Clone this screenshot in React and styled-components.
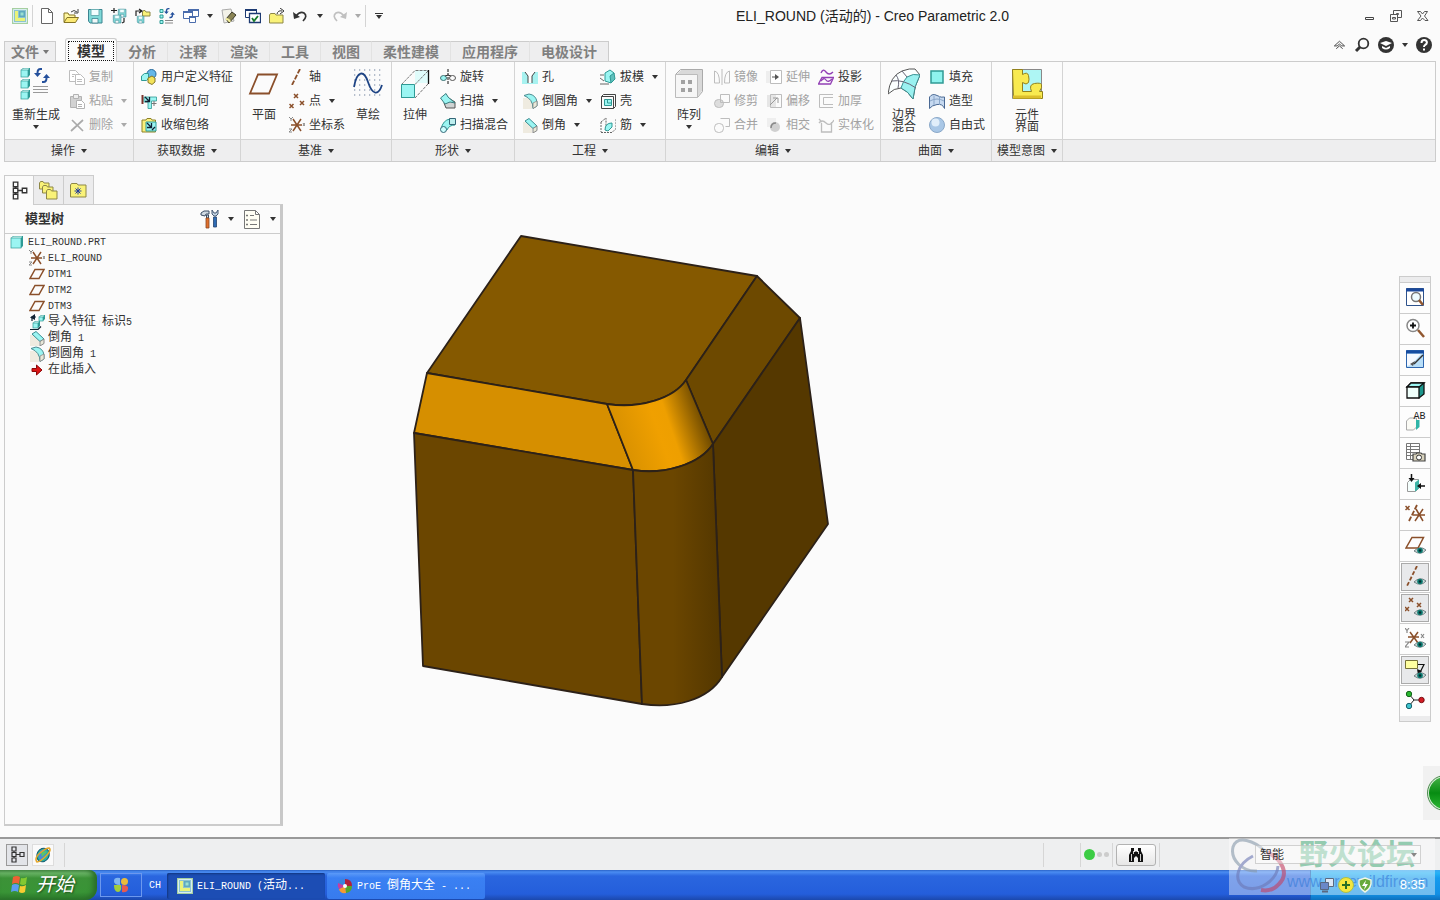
import React from "react";
import styled, { createGlobalStyle, css } from "styled-components";

const GlobalStyle = createGlobalStyle`
  *, *::before, *::after { box-sizing: border-box; }
  html, body { margin: 0; padding: 0; }
  body {
    background: #fbfbfb;
    color: #333;
    font: 12px/16px "Liberation Sans", "Noto Sans CJK SC", sans-serif;
  }
  button, select { font: inherit; color: inherit; }
  button { border: 0; padding: 0; background: none; white-space: nowrap; }
  ul { list-style: none; margin: 0; padding: 0; }
  svg { display: block; flex: none; }
`;

/* ---------- icons ---------- */

const C = "#9bf5f2";
const T = "#2f9a95";
const B = "#8a4f2a";
const N = "#1d3a72";
const G = "#bdbdbd";

const Eye = ({ x = 8, y = 10 }) => (
  <g transform={`translate(${x} ${y})`}>
    <path d="M0 5Q6-1 12 4Q7 10 0 5Z" fill="#c9d6d6" stroke="#5c6c70" strokeWidth=".8" />
    <circle cx="6" cy="4.500" r="2.800" fill="#0c7a70" />
    <circle cx="6" cy="4.500" r="1.200" fill="#052c30" />
  </g>
);
const Cross = ({ x, y, s = 2, c = B }) => (
  <path d={`M${x - s} ${y - s}l${2 * s} ${2 * s}M${x + s} ${y - s}l${-2 * s} ${2 * s}`} stroke={c} strokeWidth="1.5" fill="none" />
);
const Cube = ({ x, y, s = 7 }) => (
  <g transform={`translate(${x} ${y})`}>
    <path d={`M0 2L2 0H${s + 2}V${s}L${s} ${s + 2}H0Z`} fill={T} />
    <path d={`M.5 2L2.500 .5H${s + 1}L${s} 2Z`} fill="#e2fffd" />
    <rect y="2" width={s} height={s} fill={C} stroke={T} strokeWidth=".7" />
  </g>
);
const Cycle = ({ x, y }) => (
  <g transform={`translate(${x} ${y})`} fill="none" stroke="#24509c" strokeWidth="2">
    <path d="M8 1H6.500Q3.500 1 3.500 5V7M8 14h1.500Q12.500 14 12.500 10V8" />
    <path d="M0 5h7L3.500 9zM9 10h7L12.500 6z" fill="#24509c" stroke="none" />
  </g>
);
const Hierarchy = () => (
  <g fill="none" stroke="#333" strokeWidth="1.200">
    <path d="M3 1h4v4H3zM3 6.500h4v4H3zM3 12h4v4H3zM11 6.500h4v4h-4zM7 8.500h4M5 5v1.500M5 10.500v1.500" />
  </g>
);
const Folder = ({ x = 0, y = 0, w = 12, h = 9 }) => (
  <path transform={`translate(${x} ${y})`} d={`M.5 2V${h}H${w}V2H${w / 2}L${w / 2 - 1} .5H1.500Z`} fill="#f9f278" stroke="#8d8746" />
);
const CsysBody = () => (
  <g fill="none">
    <path d="M2 8H13M4 2l8 12M12 2l-8 12" stroke={B} strokeWidth="1.500" />
    <path d="M0 0l2 2 2-2M2 2v2M14 6l2 3M16 6l-2 3M0 12h3l-3 3h3" stroke="#888" />
  </g>
);
const Disk = ({ x = 0, y = 0, s = 14 }) => (
  <g transform={`translate(${x} ${y}) scale(${s / 14})`}>
    <path d="M.5 .5H14V14H2L.5 12Z" fill="#7fd9d8" stroke="#3b8490" />
    <path d="M3 .5h8v6H3z" fill="#f2fefe" stroke="#6cb0b4" />
    <path d="M4 9.500h6V14H4z" fill="#f1f8f8" stroke="#3b8490" strokeWidth=".8" />
  </g>
);

const ICONS = {
  app: <g><rect width="16" height="16" fill="#a6cfa0" /><path d="M1.500 1.500h13v13h-13z" fill="#8cc4cf" stroke="#d8eef0" /><path d="M3 3h3v7h7v3H3z" fill="#e9f37a" /><path d="M7 3h6v6H7z" fill="#5fa9c0" /><path d="M8.500 4.500h3v3h-3z" fill="#9be0d0" /></g>,
  page: <path d="M2.500 .5h7l4 4v11h-11zM9.500 .5v4h4" fill="#fff" stroke="#666" />,
  open: <g><path d="M1 14V5h4l1 2h6v2" fill="#fff7a0" stroke="#857525" /><path d="M1 14.500l3-5h11.500l-3 5z" fill="#fbe873" stroke="#857525" /><path d="M8 4q3-3 6 0M15 1v4h-4" fill="none" stroke="#444" /></g>,
  save: <Disk x={1} y={1} />,
  saveCopy: <g><Disk x={7} y={1} s={8} /><Disk x={2} y={7} s={8} /><path d="M0 2.500h6M3 0v5M13 10v4l-2 1" stroke="#222" strokeWidth="1.200" fill="none" /></g>,
  saveTo: <g><Folder x={7} y={2} w={8} h={6} /><Disk x={2} y={8} s={7} /><path d="M1 8V3h5M4 1l3 2-3 2" fill="none" stroke="#222" strokeWidth="1.200" /></g>,
  regenSmall: <g><path d="M1 1.500h3v3H1zM1 7h3v3H1zM1 12.500h3v3H1z" fill={C} stroke={T} /><path d="M6 15h8M6 12.500h8" stroke="#888" /><g transform="translate(5 0) scale(.68)"><Cycle x={0} y={0} /></g></g>,
  windows: <g fill="#fff" stroke="#4a6cac"><path d="M5.500 1.500h10v7h-10z" /><path d="M5 2h11" strokeWidth="2" /><path d="M.5 3.500h9v7h-9z" /><path d="M0 4h10" strokeWidth="2" /><path d="M6.500 8.500h6v6h-6z" /><path d="M6 9h7" strokeWidth="2" /></g>,
  brush: <g><path d="M1 2l9-1 3 12-10 2z" fill="#f3f2e8" stroke="#aaa" /><path d="M5 11L11 4l4 3-7 8z" fill="#8a8455" stroke="#3b3a28" /><path d="M5 11q3 0 4 3" stroke="#f3ee9b" strokeWidth="2" fill="none" /></g>,
  check: <g fill="#fff" stroke={N}><path d="M.5 1.500h11v8H.5z" /><path d="M0 2h12" strokeWidth="2" /><path d="M4.500 5.500h11v9h-11z" strokeWidth="1.300" /><path d="M7 10l2 3 4-5" stroke="#167a2a" strokeWidth="1.800" fill="none" /></g>,
  closeFolder: <g><Folder x={0} y={5} w={14} h={10} /><path d="M8 6q1-4 5-3M11 0l4 3-4 3" fill="none" stroke="#333" /></g>,
  undo: <g><path d="M3 8Q7 3 11 5Q15 8 10 13" fill="none" stroke="#333" strokeWidth="1.700" /><path d="M0 4l1 7 6-2z" fill="#333" /></g>,
  redo: <g><path d="M13 8Q9 3 5 5Q1 8 6 13" fill="none" stroke="#c0c0c0" strokeWidth="1.700" /><path d="M16 4l-1 7-6-2z" fill="#c0c0c0" /></g>,

  regen: <g><Cube x={1} y={0} s={7} /><Cube x={1} y={11} s={7} /><Cube x={1} y={22} s={7} /><Cycle x={14} y={0} /><path d="M13 18.500h15M13 21.500h15M13 24.500h15" stroke="#999" /></g>,
  plane: <path d="M10 6.500H29L21 25.500H2Z" fill="none" stroke={B} strokeWidth="1.800" />,
  sketch: <g><path d="M2 2h28M2 7h28M2 12h28M2 17h28M2 22h28M2 27h28" stroke="#9eaabd" strokeWidth="1.300" strokeDasharray="1.300 3.700" /><path d="M2 19C5 2 12 2 16 14S26 29 30 17" fill="none" stroke="#1d4384" strokeWidth="1.800" /></g>,
  extrude: <g><path d="M16 2h14v13H16z" fill="#e0fcfb" /><path d="M2.500 16.500L16 2.500H29.500M16 16.500L29 3M16 30L29 16M2.500 30V17" fill="none" stroke="#777" strokeDasharray="3 1" /><path d="M29.500 2v14" stroke="#111" strokeWidth="1.300" /><path d="M2.500 16.500h13v13h-13z" fill={C} stroke={T} /></g>,
  pattern: <g><path d="M3 7L8 2h21v21l-5 6z" fill="#d9d9d9" /><path d="M2.500 6.500L7.500 1.500h22v22l-5 6" fill="none" stroke="#aaa" /><path d="M2.500 6.500h22v23h-22z" fill="#f6f6f6" stroke="#bbb" /><path d="M8 12h4v4H8zM15 12h4v4h-4zM8 20h4v4H8zM15 20h4v4h-4z" fill="#a2a2a2" /></g>,
  boundary: <g strokeLinejoin="round"><path d="M0 26Q2 8 14 3Q22 0 27 1L32 7Q26 18 25 31Q20 23 13 20Q6 20 0 26Z" fill="#fbffff" stroke="#555" /><path d="M19 9Q25 5 32 7Q26 18 25 31Q20 23 13 20Q15 13 19 9Z" fill="#9af1f0" stroke="#3b9193" /><path d="M14 3L19 9M4 13Q15 11 28 20M8 7Q12 12 10 20" fill="none" stroke="#667" /></g>,
  uiParts: <g><path d="M1.500 1.500h29v29h-29z" fill="#aef6f4" stroke="#888" /><path d="M1.500 1.500h10v5q5-3 6 1t0 7q-2 3-6 0v9h9q-3-7 3-8t7 1q1 3-2 7h3v7h-29z" fill="#f8ea50" stroke="#92811c" /><path d="M2 29h28" stroke="#dcbf2c" strokeWidth="3" /></g>,

  copy: <g fill="#fff" stroke={G}><path d="M.5 1.500h6l3 3v8h-9z" /><path d="M6.500 5.500h5l4 4v6h-9zM8 10.500h5M8 12.500h5M3 5.500h3M3 7.500h2" /></g>,
  paste: <g stroke="#b2b2b2"><path d="M1.500 3.500h11v11h-11z" fill="#d2d2d2" /><path d="M4.500 1.500h5v4h-5z" fill="#eee" /><path d="M7.500 7.500h5l3 3v5h-8zM9 11.500h4M9 13.500h4" fill="#fff" /></g>,
  del: <path d="M3 3l11 11M14 3L2 14" stroke="#aaa" strokeWidth="1.700" />,
  udf: <g><circle cx="10.500" cy="5" r="4.500" fill="#65b7e8" stroke="#24679b" /><path d="M.5 7l3-2.500h4v5l-2 2h-5z" fill={C} stroke={T} /><path d="M7 9l4-2 3 2v4l-3 2.500-4-2z" fill="#f3e35a" stroke="#85762a" /></g>,
  copyGeom: <g><path d="M3 4h12.500v4h-5v7.500H7V9H3z" fill={C} stroke={T} strokeWidth=".8" /><path d="M1.500 2v9" stroke="#7b352e" strokeWidth="2" /><path d="M4 4l4 4M8.500 4v4.500H4" stroke="#123" strokeWidth="1.300" fill="none" /><path d="M13 8v5M10.500 10.500h5" stroke="#777" fill="none" /></g>,
  shrink: <g><path d="M1 3h4l1-1.500h4L11 3h3.500v12H1z" fill="#faf07c" stroke="#8d8127" /><path d="M5 5h10v9H5z" fill={C} stroke={T} /><path d="M6 6l4 4M10.500 6v4.500H6M11 13l3-3" stroke="#123" strokeWidth="1.300" fill="none" /></g>,
  axis: <path d="M11 0L3 16" stroke={B} strokeWidth="1.800" strokeDasharray="5 1.500" />,
  points: <g><Cross x={7} y={3} /><Cross x={2.5} y={13} /><Cross x={13} y={10} /></g>,
  csys: <CsysBody />,
  revolve: <g fill="none"><ellipse cx="3.500" cy="9" rx="3" ry="2.500" stroke="#3f7072" fill={C} /><ellipse cx="12.500" cy="9" rx="3" ry="2.500" stroke="#555" /><path d="M8 0v16" stroke="#111" strokeDasharray="3 1" /><path d="M5 7q3-2 6 0" stroke="#333" /></g>,
  sweep: <g strokeLinejoin="round"><path d="M4 10L7 4l8 5v6H6z" fill="#cfd3d3" stroke="#555" /><path d="M.5 5L6 .5 8 4l7 6-5-1-5 2z" fill={C} stroke="#3b7c7e" /></g>,
  sweptBlend: <g><path d="M1 12Q3 3 10 2l5 6Q9 8 7 13z" fill={C} stroke={T} /><circle cx="3.500" cy="12.500" r="3" fill="#cff" stroke="#367" /><path d="M9.500 1.500h6v6h-6z" fill="#bdeeee" stroke="#367" /></g>,
  hole: <g><path d="M0 3h16v12H0z" fill="#a7f2f0" /><path d="M3 3h10l-3 4v7H6V7z" fill="#fff" /><path d="M3 3l3 4v7M13 3l-3 4v7" fill="none" stroke="#444" /></g>,
  round: <g><path d="M1 5h6l3 3v8H1z" fill="#efebe0" /><path d="M2 2.500L7 1Q14 2 15 9v4l-4 2.500Q11 6 2 2.500Z" fill={C} stroke="#4b8c91" /><path d="M11 10l4-2v5l-4 2.500z" fill="#e9e9d9" stroke="#888" strokeWidth=".8" /></g>,
  chamfer: <g><path d="M1 5h6l3 5v6H1z" fill="#efebe0" /><path d="M3 4l4-2.500 8 7.500-4 2.500z" fill={C} stroke="#3b8c91" /><path d="M11 11.500L15 9v4.500L11 16z" fill="#e9e9d9" stroke="#888" /></g>,
  draft: <g><path d="M5 4l5-3 4 3-3 10-6-2z" fill={C} stroke={T} /><path d="M11 14l4-4-1-6-4 3z" fill="#5fc0bc" stroke={T} /><path d="M0 6h4M0 9l4 3M0 15h9" stroke="#666" /></g>,
  shell: <g fill="none" stroke="#444"><path d="M1.500 3.500l2-2h12v12l-2 2h-12z" /><path d="M1.500 3.500h12v12" /><path d="M4.500 6.500h7v6h-7z" fill={C} stroke={T} /><path d="M7.500 6.500v3.500h4" stroke={T} /></g>,
  rib: <g><path d="M1 5l5-4v12M1 15.500h11l4-4V2M1 5v10" fill="none" stroke="#666" strokeDasharray="2 1" /><path d="M5 13Q5 6 12 6v4l-4 4z" fill={C} stroke={T} /></g>,
  mirror: <g fill="none" stroke={G}><path d="M.5 2q5 1 5 12h-5zM15.500 2q-5 1-5 12h5zM8 0v16" /></g>,
  trim: <g stroke={G}><rect x=".5" y="6.500" width="9" height="8" rx="4" fill="#ddd" /><path d="M6.500 1.500h9v8h-9z" fill="none" /></g>,
  merge: <g fill="none" stroke={G}><rect x=".5" y="6.500" width="9" height="9" rx="4" /><path d="M6.500 1.500h9v8h-4" /></g>,
  extend: <g stroke={G}><path d="M0 2h4v12H0z" fill="#eee" stroke="none" /><path d="M4.500 1.500h11v13h-11z" fill="#fff" /><path d="M6 8h6" stroke="#555" fill="none" /><path d="M9 5l4 3-4 3z" fill="#555" stroke="none" /></g>,
  offset: <g stroke={G}><path d="M1 2h9v12H1z" fill="#e6e6e6" stroke="none" /><path d="M4.500 1.500h11v13h-11z" fill="none" /><path d="M4 12l7-7M7 5h5v5" stroke="#999" fill="none" /></g>,
  intersect: <g><path d="M1 1h9v9H1z" fill="#efefef" /><circle cx="9" cy="10" r="5" fill="#d0d0d0" /><path d="M5 11q0-5 5-5" stroke="#888" fill="none" strokeWidth="1.500" /></g>,
  project: <g fill="none" stroke="#9340b5" strokeWidth="1.300"><path d="M3 4q2-5 5-1t7 0M4 8.500h11.500l-3 6.500H.5z" /><path d="M3 12q3-4 5-1t6-1" /></g>,
  thicken: <path d="M15 1.500H1.500v13H15M15 4.500H5.500v7H15" fill="none" stroke={G} />,
  solidify: <path d="M1 6q3-4 7 0t8-3M3.500 6v9h10V5M1 2l3 3" fill="none" stroke={G} strokeWidth="1.300" />,
  fill: <rect x="2" y="2" width="12" height="12" fill="#8ef3ee" stroke={T} strokeWidth="1.500" />,
  style: <g><path d="M.5 4q3-4 7.500-1.500T15.500 4v11.500q-2-5-7.500-4T.5 15.500z" fill="#c6d9f0" stroke="#496893" /><path d="M5 3v9M10.500 3v9M1 8q7-4 14 0" stroke="#8ba6c8" fill="none" /></g>,
  freestyle: <g><circle cx="8" cy="8" r="7.500" fill="#a9c7e6" stroke="#8aa8c8" /><circle cx="6.500" cy="5.500" r="4" fill="#eff8ff" opacity=".8" /></g>,

  tree: <Hierarchy />,
  folders: <g><Folder x={0} y={0} w={10} h={8} /><Folder x={3} y={4} w={11} h={8} /><Folder x={7} y={8} w={11} h={10} /></g>,
  favorites: <g><Folder x={0} y={1} w={16} h={14} /><path d="M8 5.500v7M4.500 9h7M5.500 6.500l5 5M10.500 6.500l-5 5" stroke="#233c9c" /></g>,
  tools: <g><path d="M1 4l3-2h5v3H6L5 7 1 6z" fill="#cfd9e2" stroke="#3a4c64" /><path d="M6.500 6h2v3h-2z" fill="#cfd9e2" stroke="#3a4c64" /><path d="M6 9h3v10H6z" fill="#e0702c" stroke="#8a4724" strokeWidth=".8" /><path d="M12 1v4l2 2h2l2-2V1l-2 3h-2z" fill="#c3d3e2" stroke="#465a75" /><path d="M13.500 8h3v10h-3z" fill="#2f6bb3" stroke="#24436f" strokeWidth=".8" /></g>,
  settings: <g fill="#fffef4" stroke="#777"><path d="M1.500 .5h11l4 4v14h-15zM12.500 .5v4h4" /><path d="M7 5.500h4M7 10h7M7 14.500h7" /><path d="M3.500 5h1v1h-1zM3.500 9.500h1v1h-1zM3.500 14h1v1h-1z" /></g>,
  part: <Cube x={2} y={2} s={10} />,
  plane16: <path d="M6 3.500H15L10 12.500H1Z" fill="none" stroke={B} strokeWidth="1.500" />,
  importF: <g><Cube x={10} y={1} s={4} /><Cube x={4} y={7} s={5} /><path d="M1 15.500h8l3-3M3 7V3h4" fill="none" stroke="#123" strokeWidth="1.200" /><path d="M6 0L1 3.500 6 6z" fill="#123" /></g>,
  insert: <path d="M3 6.500h4.500V3L13 8l-5.500 5V9.500H3z" fill="#dc1515" stroke="#8c0808" />,

  refit: <g><path d="M1.500 1.500h17v17h-17z" fill="#fff" stroke="#2d528c" /><path d="M1 3h18" stroke="#1b499b" strokeWidth="3" /><circle cx="11" cy="10" r="4.500" fill="#eefcff" stroke="#777" strokeWidth="1.500" /><path d="M14 13l4 5" stroke="#91572f" strokeWidth="2.500" /></g>,
  zoomIn: <g><circle cx="8" cy="7.500" r="6" fill="#fff" stroke="#888" strokeWidth="1.500" /><path d="M5 7.500h6M8 4.500v6" stroke="#111" strokeWidth="1.800" /><path d="M13 12l6 7" stroke="#91572f" strokeWidth="2.500" /></g>,
  repaint: <g><path d="M1.500 1.500h17v17h-17z" fill="#b8def8" stroke="#2d65ae" /><path d="M1 3h18" stroke="#164ca0" strokeWidth="3" /><path d="M2 5h14L6 16l-4 1z" fill="#f5f9ff" /><path d="M18 6L9 15" stroke="#333" strokeWidth="1.500" /><path d="M10 12l-5 3 3 2z" fill="#555" /></g>,
  shaded: <g stroke="#111" strokeWidth="1.300"><path d="M2 7l4-4h13v11l-5 4z" fill="#1c968c" /><path d="M6 3h13l-5 4H2z" fill={C} /><path d="M2 7h12v11H2z" fill="#effffb" /></g>,
  saved: <g><path d="M1.500 10l3-3h7v9l-3 3h-7z" fill="#fbfbf5" stroke="#aaa" /><path d="M11 9h3.500v7L11 19z" fill="#2fb5a6" /><text x="8.500" y="8" fontSize="10" fontFamily="Liberation Mono" fill="#222">AB</text></g>,
  viewMgr: <g><path d="M1.500 1.500h13v16h-13zM1 4.500h13M1 7.500h13M1 10.500h13M1 13.500h13M5.500 1v16" fill="#fff" stroke="#777" /><path d="M8 12h3l1-1h4l1 1h3v7H8z" fill="#d9d3bd" stroke="#444" strokeWidth="1.200" /><circle cx="14" cy="15.500" r="2.500" fill="#fff" stroke="#333" /></g>,
  clip: <g><path d="M2.500 9.500l3-3h8v9l-3 3h-8z" fill="#f5fffd" stroke="#999" /><path d="M10 9.500l4-3v9l-4 3z" fill="#3cb4a6" /><path d="M6.500 1v5M20 13h-5" fill="none" stroke="#111" strokeWidth="1.500" /><path d="M3.500 5h6l-3 4zM16 10v6l-4-3z" fill="#111" /></g>,
  datumAll: <g><Cross x={2.5} y={4} s={2} /><path d="M12 1L4 17" stroke={B} strokeWidth="1.800" strokeDasharray="5 1.500" /><path d="M8 11h12M11 5l7 12M18 5l-8 12" stroke={B} strokeWidth="1.500" /></g>,
  planeEye: <g><path d="M7 2.500H18.500L13 13H1Z" fill="none" stroke={B} strokeWidth="1.500" /><Eye x={9} y={11} /></g>,
  axisEye: <g><path d="M12 0L2 20" stroke={B} strokeWidth="1.800" strokeDasharray="4 2" /><Eye x={9} y={11} /></g>,
  pointEye: <g><Cross x={6} y={3} /><Cross x={2} y={12} /><Cross x={14} y={8} /><Eye x={9} y={11} /></g>,
  csysEye: <g><path d="M3 9h11M5 4l8 11M13 4L5 15" stroke={B} strokeWidth="1.500" /><path d="M0 0l2 2.500L4 0M2 2.500V5M0 14h4l-4 5h4M16 6l3 4M19 6l-3 4" stroke="#888" fill="none" strokeWidth="1.200" /><Eye x={9} y={12} /></g>,
  noteEye: <g><path d="M.5 1.500h12v8H.5z" fill="#ffffa0" stroke="#777238" /><path d="M13 5.500h6l-4 8" fill="none" stroke="#111" strokeWidth="1.200" /><path d="M12 10l1 6 4-4z" fill="#111" /><Eye x={9} y={12} /></g>,
  spin: <g><path d="M4 4l5 6h8M9 10l-5 6" stroke="#222" fill="none" /><circle cx="4" cy="4" r="2.700" fill="#29b72f" stroke="#14631a" /><circle cx="4" cy="16" r="2.700" fill="#40c4ce" stroke="#16616c" /><circle cx="16.500" cy="10" r="2.700" fill="#d41d25" stroke="#790c11" /></g>,

  min: <path d="M4.500 9.500h8v2h-8z" fill="none" stroke="#444" />,
  restore: <g fill="#fbfbfb" stroke="#555"><path d="M5.500 2.500h8v7h-8zM8.500 5.500h2v1h-2z" /><path d="M2.500 6.500h7v7h-7zM4.500 9.500h3v1.500h-3z" /></g>,
  close: <path d="M2.500 3.500h3l2 2.500 2-2.500h3L9.500 8l3.500 4.500h-3L7.500 10l-2 2.500h-3L6 8z" fill="none" stroke="#555" />,
  collapse: <path d="M2.500 8.500L8 3.500l5.500 5h-3L8 6.500l-2.500 2zM4.500 11.500L8 8.500l3.500 3" fill="none" stroke="#444" />,
  search: <g fill="none" stroke="#333"><circle cx="9.500" cy="6.500" r="4.800" strokeWidth="1.800" /><path d="M6 10l-4 4" strokeWidth="3" /></g>,
  learn: <g><circle cx="8" cy="8" r="8" fill="#333" /><path d="M2 6l6-2 6 2-6 3zM4 9v2q4 3 8 0V9L8 11z" fill="#fff" /></g>,
  help: <g><circle cx="8" cy="8" r="8" fill="#333" /><path d="M5.500 6q0-3 2.700-3t2.700 2.500Q10.900 7 9 8q-1 .6-1 2" fill="none" stroke="#fff" strokeWidth="2" /><path d="M7 11.500h2v2H7z" fill="#fff" /></g>,

  browser: <g><ellipse cx="8" cy="8" rx="6" ry="7" fill="#25b3a3" stroke="#145870" transform="rotate(30 8 8)" /><path d="M6 3q6-1 5 4l-5 6q-3-2-2-6z" fill="#4d86d8" /><path d="M6 6q3-3 6-1l-5 5z" fill="#59c766" /><path d="M2 15Q-1 11 5 6T14 1Q17 3 11 9T2 15z" fill="none" stroke="#e5a72b" strokeWidth="1.600" /></g>,
  binoc: <g fill="#111"><path d="M3 1h3v4h1l1-1 1 1h1V1h3v3l2 4v7h-5v-4l-2-2-2 2v4H1V8l2-4z" /><path d="M3.500 7v7M12.500 7v7M5.500 4v3M10.500 4v3" stroke="#fff" strokeWidth=".8" /></g>,
  winFlag: <g><path d="M3 2q4-2 7 0L9 9Q6 7 2 9z" fill="#ee6134" /><path d="M11 3q3 1 6-1l-1 7q-3 2-6 0z" fill="#83c931" /><path d="M2 10q3-2 7 0l-1 7q-3-2-7 0z" fill="#5b9df0" /><path d="M10 11q3 1 6-1l-1 7q-3 2-6 0z" fill="#f7cc32" /></g>,
  clover: <g><path d="M7 1Q1 0 1 4t6 4z" fill="#7fb5f0" /><circle cx="11.500" cy="4.500" r="3.500" fill="#eabc3b" /><path d="M1 8h7q1 7-3 7t-4-7z" fill="#a3ce3b" /><path d="M9 8q7 0 6 4t-6 3z" fill="#e65a50" /></g>,
  pinwheel: <g><path d="M8 8L1 5q2-5 7-4z" fill="#3a84dd" /><path d="M8 8V1q7 0 7 7z" fill="#b0203c" /><path d="M8 8h7q0 6-6 7z" fill="#56a52b" /><path d="M8 8l1 7q-6 1-7-4z" fill="#f59a32" /><path d="M8 8l-6 3q-2-3-1-6z" fill="#c93ca0" /><circle cx="8" cy="8" r="2" fill="#fff" /></g>,
  network: <g stroke="#5a6880"><path d="M6.500 1.500h8v8h-8z" fill="#dce7f5" /><path d="M1.500 5.500h8v7h-8z" fill="#6a88c8" /><path d="M3 14.500h6" strokeWidth="2" /></g>,
  plus: <g><circle cx="8" cy="8" r="7.500" fill="#f4e63e" stroke="#a9bf4b" /><path d="M8 4v8M4 8h8" stroke="#286e25" strokeWidth="2" /></g>,
  shield: <g><path d="M8 1l6 2q1 8-6 12Q1 11 2 3z" fill="#66a93b" stroke="#f1f6e7" strokeWidth="1.500" /><path d="M9 3L5 9h3l-1 4 4-6H8z" fill="#fff" /></g>,
};

const Icon = ({ name, size = 16, box = size }) => (
  <svg width={size} height={size} viewBox={`0 0 ${box} ${box}`} aria-hidden="true">{ICONS[name]}</svg>
);

const Caret = styled.span`
  flex: none;
  width: 0;
  height: 0;
  border: 3px solid transparent;
  border-top: 4px solid ${(p) => (p.$dim ? "#aaa" : "#333")};
  border-bottom: 0;
`;

/* ---------- title bar ---------- */

const Page = styled.div`
  min-height: 100vh;
  display: flex;
  flex-direction: column;
  position: relative;
`;
const TitleBar = styled.header`
  display: flex;
  align-items: center;
  height: 32px;
  padding: 0 4px 0 8px;
`;
const QuickButton = styled.button`
  display: flex;
  align-items: center;
  justify-content: center;
  width: ${(p) => (p.$narrow ? 14 : 24)}px;
  height: 24px;
`;
const Divider = styled.span`
  width: 1px;
  height: 22px;
  margin-right: 2px;
  background: #d4d4d4;
`;
const Customize = styled.button`
  width: 22px;
  height: 24px;
  display: flex;
  flex-direction: column;
  align-items: center;
  justify-content: center;
  gap: 1px;
  &::before { content: ""; width: 8px; height: 1px; background: #333; }
`;
const Title = styled.h1`
  flex: 1;
  margin: 0;
  text-align: center;
  font-size: 14px;
  font-weight: 400;
  line-height: 20px;
  color: #222;
`;
const WindowButtons = styled.div`
  display: flex;
  button { width: 27px; height: 24px; display: grid; place-items: center; }
`;

/* ---------- ribbon ---------- */

const TabRow = styled.nav`
  display: flex;
  align-items: flex-end;
  height: 29px;
  padding: 0 8px 0 4px;
`;
const tabText = css`
  font-size: 14px;
  font-weight: 700;
  line-height: 18px;
  color: #808080;
`;
const Tab = styled.button`
  ${tabText}
  height: 20px;
  padding: 0 11px;
  background: #eeeeef;
  border-top: 1px solid #ccc;
  border-right: 1px solid ${(p) => (p.$last ? "#ccc" : "#e2e2e2")};
`;
const FileTab = styled(Tab)`
  display: flex;
  align-items: center;
  gap: 4px;
  padding: 0 6px;
  margin-right: 9px;
  border: 1px solid #ccc;
  border-bottom: 0;
  ${Caret} { border-top-color: #777; }
`;
const ActiveTab = styled.button`
  ${tabText}
  position: relative;
  z-index: 1;
  height: 24px;
  margin-bottom: -1px;
  padding: 2px;
  color: #333;
  background: #fbfbfb;
  border: 1px solid #ccc;
  border-bottom: 0;
  border-radius: 3px 3px 0 0;
  span { display: block; padding: 0 8px; border: 1px dotted #111; }
`;
const HelpTools = styled.div`
  margin-left: auto;
  align-self: flex-start;
  display: flex;
  align-items: center;
  gap: 8px;
  height: 26px;
  button { display: grid; place-items: center; }
`;
const Ribbon = styled.section`
  display: flex;
  height: 101px;
  margin: 0 4px;
  border: 1px solid #ccc;
`;
const Group = styled.div`
  display: flex;
  flex-direction: column;
  flex: ${(p) => (p.$w ? `0 0 ${p.$w}px` : 1)};
  min-width: 0;
  border-right: ${(p) => (p.$w ? "1px solid #d4d4d4" : 0)};
`;
const GroupBody = styled.div`
  flex: 1;
  display: flex;
  padding-top: 3px;
`;
const GroupFooter = styled.button`
  height: 22px;
  display: flex;
  align-items: center;
  justify-content: center;
  gap: 6px;
  background: #eeeeef;
  border-top: 1px solid #d4d4d4;
`;
const Column = styled.div`
  display: flex;
  flex-direction: column;
  margin-left: 2px;
  &:first-child { margin-left: 7px; }
  & + & { margin-left: 8px; }
`;
const Command = styled.button`
  display: flex;
  align-items: center;
  height: 24px;
  color: ${(p) => (p.$dim ? "#a2a2a2" : "#333")};
  ${Caret} { margin-left: 8px; }
  svg { margin-right: 4px; }
`;
const BigCommand = styled.button`
  display: flex;
  flex-direction: column;
  align-items: center;
  min-width: ${(p) => (p.$wide ? 70 : 44)}px;
  padding: 3px 7px 0;
  line-height: 12px;
  span:first-of-type { margin-top: 9px; white-space: pre; }
  ${Caret} { margin-top: 4px; }
`;

const RIBBON = [
  { name: "操作", w: 129, items: [
    { big: "重新生成", icon: "regen", caret: true },
    { col: [["copy", "复制", 0, 1], ["paste", "粘贴", 1, 1], ["del", "删除", 1, 1]] },
  ] },
  { name: "获取数据", w: 107, items: [
    { col: [["udf", "用户定义特征"], ["copyGeom", "复制几何"], ["shrink", "收缩包络"]] },
  ] },
  { name: "基准", w: 151, items: [
    { big: "平面", icon: "plane" },
    { col: [["axis", "轴"], ["points", "点", 1], ["csys", "坐标系"]] },
    { big: "草绘", icon: "sketch" },
  ] },
  { name: "形状", w: 123, items: [
    { big: "拉伸", icon: "extrude" },
    { col: [["revolve", "旋转"], ["sweep", "扫描", 1], ["sweptBlend", "扫描混合"]] },
  ] },
  { name: "工程", w: 151, items: [
    { col: [["hole", "孔"], ["round", "倒圆角", 1], ["chamfer", "倒角", 1]] },
    { col: [["draft", "拔模", 1], ["shell", "壳"], ["rib", "筋", 1]] },
  ] },
  { name: "编辑", w: 215, items: [
    { big: "阵列", icon: "pattern", caret: true },
    { col: [["mirror", "镜像", 0, 1], ["trim", "修剪", 0, 1], ["merge", "合并", 0, 1]] },
    { col: [["extend", "延伸", 0, 1], ["offset", "偏移", 0, 1], ["intersect", "相交", 0, 1]] },
    { col: [["project", "投影"], ["thicken", "加厚", 0, 1], ["solidify", "实体化", 0, 1]] },
  ] },
  { name: "曲面", w: 111, items: [
    { big: "边界\n混合", icon: "boundary" },
    { col: [["fill", "填充"], ["style", "造型"], ["freestyle", "自由式"]] },
  ] },
  { name: "模型意图", w: 71, items: [{ big: "元件\n界面", icon: "uiParts", wide: true }] },
];

/* ---------- workspace ---------- */

const Workspace = styled.main`
  flex: 1;
  position: relative;
  display: flex;
  padding: 13px 9px 11px 4px;
`;
const SidePanel = styled.aside`
  width: 279px;
  display: flex;
  flex-direction: column;
`;
const PanelTabs = styled.div`
  display: flex;
  height: 29px;
`;
const PanelTab = styled.button`
  display: grid;
  place-items: center;
  width: 30px;
  height: ${(p) => (p.$active ? 30 : 29)}px;
  position: relative;
  background: ${(p) => (p.$active ? "#fbfbfb" : "#ececed")};
  border: 1px solid #ccc;
  border-bottom: 0;
  & + & { border-left: 0; }
`;
const Panel = styled.section`
  flex: 1;
  background: #fbfbfb;
  border: 1px solid #ccc;
  border-right: 3px solid #c8c8c8;
  border-bottom-width: 2px;
`;
const PanelHead = styled.div`
  display: flex;
  align-items: center;
  gap: 9px;
  height: 29px;
  padding: 0 4px 0 20px;
  border-bottom: 1px solid #ccc;
  h2 { flex: 1; margin: 0; font-size: 13px; line-height: 16px; }
  button { display: flex; align-items: center; gap: 8px; }
`;
const Mono = styled.span`
  font-family: "Liberation Mono", monospace;
  font-size: 10px;
  white-space: pre;
`;
const TreeItem = styled.li`
  display: flex;
  align-items: center;
  gap: 3px;
  height: 16px;
  padding-left: ${(p) => (p.$root ? 4 : 24)}px;
`;
const Viewport = styled.div`
  flex: 1;
  padding: 58px 0 0 129px;
`;
const ViewBar = styled.div`
  align-self: center;
  width: 32px;
  margin-bottom: 4px;
  border: 1px solid #ccc;
  background: #fdfdfd;
  &::before, &::after { content: ""; display: block; height: 5px; background: #ececed; }
`;
const ViewButton = styled.button`
  display: grid;
  place-items: center;
  position: relative;
  width: 30px;
  height: 31px;
  border-top: 1px solid #ccc;
  ${(p) => p.$on && css`
    background: #e8e9eb;
    box-shadow: inset 0 0 0 1px #fff, inset 0 0 0 2px #aaa;
  `}
  ${(p) => p.$more && css`
    &::after {
      content: "";
      position: absolute;
      right: 3px;
      bottom: 3px;
      border: 2px solid #444;
      border-left-color: transparent;
      border-top-color: transparent;
    }
  `}
`;
const Ball = styled.div`
  position: absolute;
  right: 0;
  bottom: 17px;
  width: 17px;
  height: 54px;
  padding: 9px 0 0 4px;
  overflow: hidden;
  background: #f1f1f1;
  &::before {
    content: "";
    display: block;
    width: 36px;
    height: 36px;
    border-radius: 50%;
    border: 2px solid #d5ecd5;
    outline: 1px solid #4e8a50;
    outline-offset: -1px;
    background: linear-gradient(#43b145, #078c12 50%, #2cb632);
  }
`;

const TREE = [
  ["part", "", "ELI_ROUND.PRT"],
  ["csys", "", "ELI_ROUND"],
  ["plane16", "", "DTM1"],
  ["plane16", "", "DTM2"],
  ["plane16", "", "DTM3"],
  ["importF", "导入特征", " ", "标识", "5"],
  ["chamfer", "倒角", " 1"],
  ["round", "倒圆角", " 1"],
  ["insert", "在此插入", ""],
];
const VIEW = [
  ["refit", "重新调整"], ["zoomIn", "放大"], ["repaint", "重画"], ["shaded", "显示样式", 0, 1],
  ["saved", "已保存方向", 0, 1], ["viewMgr", "视图管理器"], ["clip", "透视图"], ["datumAll", "基准显示过滤器", 0, 1],
  ["planeEye", "平面显示"], ["axisEye", "轴显示", 1], ["pointEye", "点显示", 1], ["csysEye", "坐标系显示"],
  ["noteEye", "注释显示", 1], ["spin", "旋转中心"],
];

const Model = () => (
  <svg width="420" height="476" viewBox="412 233 420 476" role="img" aria-label="ELI_ROUND">
    <defs>
      <linearGradient id="corner" gradientUnits="userSpaceOnUse" x1="620" y1="440" x2="702" y2="412">
        <stop offset="0" stopColor="#d99100" />
        <stop offset=".45" stopColor="#f0a000" />
        <stop offset=".6" stopColor="#ee9f00" />
        <stop offset="1" stopColor="#6d4900" />
      </linearGradient>
      <linearGradient id="edge" gradientUnits="userSpaceOnUse" x1="636" y1="0" x2="718" y2="0">
        <stop offset="0" stopColor="#6b4600" />
        <stop offset=".45" stopColor="#6b4600" />
        <stop offset="1" stopColor="#553800" />
      </linearGradient>
    </defs>
    <g stroke="#2c2118" strokeWidth="1.800" strokeLinejoin="round">
      <path d="M521 236L757 276L686 380C674 398 641 409 607 404L427 373Z" fill="#855900" />
      <path d="M427 373L607 404L633 470L414 433Z" fill="#d68f00" />
      <path d="M757 276L800 318L713 444L686 380Z" fill="#6d4900" />
      <path d="M607 404C641 409 674 398 686 380L713 444C700 464 665 475 633 470Z" fill="url(#corner)" />
      <path d="M414 433L633 470L642 704L423 666Z" fill="#6b4600" />
      <path d="M800 318L828 524L722 677L713 444Z" fill="#553800" />
      <path d="M633 470C665 475 700 464 713 444L722 677C708 700 674 709 642 704Z" fill="url(#edge)" />
    </g>
  </svg>
);

/* ---------- status bar and task bar ---------- */

const StatusBar = styled.footer`
  display: flex;
  align-items: center;
  gap: 3px;
  height: 33px;
  padding: 0 19px 0 6px;
  background: #eeeff0;
  border-top: 2px solid #999;
`;
const StatusToggle = styled.button`
  display: grid;
  place-items: center;
  width: 22px;
  height: 22px;
  margin-right: 1px;
  border: 1px solid ${(p) => (p.$on ? "#9a9a9a" : "#ddd")};
  background: ${(p) => (p.$on ? "#e2e4e8" : "#fafafa")};
`;
const StatusDivider = styled.span`
  width: 1px;
  height: 24px;
  margin-left: ${(p) => p.$gap || 0}px;
  background: #d6d6d6;
`;
const Spacer = styled.div`flex: 1;`;
const Dots = styled.div`
  display: flex;
  align-items: center;
  gap: 2px;
`;
const Dot = styled.span`
  width: ${(p) => (p.$on ? 11 : 5)}px;
  height: ${(p) => (p.$on ? 11 : 5)}px;
  border-radius: 50%;
  background: ${(p) => (p.$on ? "#3ccc44" : "#ccc")};
`;
const FindButton = styled.button`
  display: grid;
  place-items: center;
  width: 40px;
  height: 22px;
  border: 1px solid #b2b2b2;
  border-radius: 3px;
  background: linear-gradient(#fff, #e6e6e6);
`;
const FilterBox = styled.div`
  position: relative;
  z-index: 2;
  margin-left: 92px;
  ${Caret} { position: absolute; right: 4px; top: 8px; pointer-events: none; border-top-color: #888; }
`;
const FilterSelect = styled.select`
  appearance: none;
  display: block;
  width: 166px;
  height: 19px;
  padding: 0 4px;
  line-height: 16px;
  border: 1px solid rgba(170, 170, 170, 0.5);
  border-radius: 0;
  background: rgba(255, 255, 255, 0.4);
`;
const TaskBar = styled.footer`
  display: flex;
  align-items: stretch;
  height: 30px;
  color: #fff;
  background: linear-gradient(#2a63c8, #4a8cf2 2px, #2a66df 6px, #245edb 24px, #1b48ad);
`;
const Start = styled.button`
  display: flex;
  align-items: center;
  gap: 6px;
  width: 97px;
  padding-left: 10px;
  font-size: 19px;
  font-style: italic;
  line-height: 24px;
  text-shadow: 1px 1px 2px #1b4a1b;
  border-radius: 0 8px 12px 0;
  background: linear-gradient(#5a9c58, #6cb668 3px, #3c9238 8px, #399436 22px, #2a762a);
  box-shadow: inset -4px 0 5px #2a6e2a;
`;
const Launcher = styled.button`
  display: grid;
  place-items: center;
  width: 42px;
  margin: 3px 7px 3px 3px;
  border: 1px solid #6c98ee;
`;
const Lang = styled.span`
  align-self: center;
  width: 18px;
`;
const Task = styled.button`
  display: flex;
  align-items: center;
  gap: 4px;
  width: 158px;
  margin: 3px 2px 1px 0;
  padding-left: 10px;
  border-radius: 2px;
  background: ${(p) => (p.$active ? "#1c4db4" : "linear-gradient(#5b9af8, #3a80f3 5px, #377bee)")};
  box-shadow: ${(p) => (p.$active ? "inset 1px 1px 2px #12357f" : "none")};
`;
const Tray = styled.div`
  display: flex;
  align-items: center;
  gap: 3px;
  width: 130px;
  padding: 0 15px 0 8px;
  border-left: 1px solid #125fb6;
  background: linear-gradient(#3aa5f0, #25b3f6 3px, #159bee 8px, #1290e5 24px, #0d70bd);
  > * { position: relative; z-index: 2; }
  time { margin-left: auto; font-size: 13px; }
`;
const Watermark = styled.div`
  position: absolute;
  right: 5px;
  bottom: 5px;
  width: 206px;
  height: 57px;
  display: flex;
  pointer-events: none;
  background: rgba(255, 255, 255, 0.4);
`;
const WatermarkText = styled.div`
  display: flex;
  flex-direction: column;
  strong {
    padding-left: 12px;
    font-size: 29px;
    line-height: 34px;
    color: rgba(105, 185, 145, 0.7);
  }
  span { font-size: 16px; line-height: 20px; color: rgba(50, 120, 215, 0.6); }
`;

const QUICK = [
  ["page", "新建"], ["open", "打开"], ["save", "保存"], ["saveCopy", "保存副本"], ["saveTo", "另存为"],
  ["regenSmall", "重新生成"], ["windows", "窗口"], null, ["brush", "拭除"], ["check", "激活"],
  ["closeFolder", "关闭"], ["undo", "撤消"], null, ["redo", "重做"], null,
];
const TABS = ["分析", "注释", "渲染", "工具", "视图", "柔性建模", "应用程序", "电极设计"];

export default function App() {
  return (
    <Page>
      <GlobalStyle />
      <TitleBar>
        <QuickButton aria-label="Creo"><Icon name="app" /></QuickButton>
        <Divider />
        {QUICK.map((q, i) =>
          q ? (
            <QuickButton key={i} aria-label={q[1]}><Icon name={q[0]} /></QuickButton>
          ) : (
            <QuickButton key={i} $narrow aria-label="更多"><Caret $dim={i === 14} /></QuickButton>
          )
        )}
        <Divider />
        <Customize aria-label="自定义快速访问工具栏"><Caret /></Customize>
        <Title>ELI_ROUND (活动的) - Creo Parametric 2.0</Title>
        <WindowButtons>
          <button aria-label="最小化"><Icon name="min" /></button>
          <button aria-label="还原"><Icon name="restore" /></button>
          <button aria-label="关闭"><Icon name="close" /></button>
        </WindowButtons>
      </TitleBar>

      <TabRow>
        <FileTab>文件<Caret /></FileTab>
        <ActiveTab><span>模型</span></ActiveTab>
        {TABS.map((t, i) => <Tab key={t} $last={i === TABS.length - 1}>{t}</Tab>)}
        <HelpTools>
          <button aria-label="折叠"><Icon name="collapse" size={14} box={15} /></button>
          <button aria-label="搜索"><Icon name="search" /></button>
          <button aria-label="学习"><Icon name="learn" /></button>
          <button aria-label="更多"><Caret /></button>
          <button aria-label="帮助"><Icon name="help" /></button>
        </HelpTools>
      </TabRow>

      <Ribbon>
        {RIBBON.map((g) => (
          <Group key={g.name} $w={g.w}>
            <GroupBody>
              {g.items.map((it, i) =>
                it.big ? (
                  <BigCommand key={i} $wide={it.wide}>
                    <Icon name={it.icon} size={32} />
                    <span>{it.big}</span>
                    {it.caret && <Caret />}
                  </BigCommand>
                ) : (
                  <Column key={i}>
                    {it.col.map(([icon, label, caret, dim]) => (
                      <Command key={label} $dim={dim}>
                        <Icon name={icon} />
                        {label}
                        {caret ? <Caret $dim={dim} /> : null}
                      </Command>
                    ))}
                  </Column>
                )
              )}
            </GroupBody>
            <GroupFooter>{g.name}<Caret /></GroupFooter>
          </Group>
        ))}
        <Group>
          <GroupBody />
          <GroupFooter as="div" />
        </Group>
      </Ribbon>

      <Workspace>
        <SidePanel>
          <PanelTabs>
            <PanelTab $active aria-label="模型树"><Icon name="tree" size={19} box={17} /></PanelTab>
            <PanelTab aria-label="文件夹浏览器"><Icon name="folders" size={19} /></PanelTab>
            <PanelTab aria-label="收藏夹"><Icon name="favorites" size={17} /></PanelTab>
          </PanelTabs>
          <Panel>
            <PanelHead>
              <h2>模型树</h2>
              <button aria-label="设置"><Icon name="tools" size={20} /><Caret /></button>
              <button aria-label="显示"><Icon name="settings" size={19} /><Caret /></button>
            </PanelHead>
            <ul>
              {TREE.map(([icon, cjk, latin, cjk2, latin2], i) => (
                <TreeItem key={i} $root={i === 0}>
                  <Icon name={icon} />
                  <span>{cjk}<Mono>{latin}</Mono>{cjk2}<Mono>{latin2}</Mono></span>
                </TreeItem>
              ))}
            </ul>
          </Panel>
        </SidePanel>
        <Viewport><Model /></Viewport>
        <ViewBar>
          {VIEW.map(([icon, label, on, more]) => (
            <ViewButton key={icon} aria-label={label} $on={on} $more={more}>
              <Icon name={icon} size={21} />
            </ViewButton>
          ))}
        </ViewBar>
        <Ball />
      </Workspace>

      <StatusBar>
        <StatusToggle $on aria-label="导航器"><Icon name="tree" size={17} /></StatusToggle>
        <StatusToggle aria-label="浏览器"><Icon name="browser" /></StatusToggle>
        <StatusDivider $gap={6} />
        <Spacer />
        <StatusDivider />
        <StatusDivider $gap={33} />
        <Dots><Dot $on /><Dot /><Dot /></Dots>
        <StatusDivider />
        <FindButton aria-label="查找"><Icon name="binoc" /></FindButton>
        <StatusDivider />
        <FilterBox>
          <FilterSelect aria-label="选择过滤器" defaultValue="smart"><option value="smart">智能</option></FilterSelect>
          <Caret />
        </FilterBox>
      </StatusBar>

      <TaskBar>
        <Start><Icon name="winFlag" size={20} />开始</Start>
        <Launcher aria-label="启动"><Icon name="clover" /></Launcher>
        <Lang><Mono>CH</Mono></Lang>
        <Task $active><Icon name="app" /><span><Mono>ELI_ROUND (</Mono>活动<Mono>...</Mono></span></Task>
        <Task><Icon name="pinwheel" /><span><Mono>ProE </Mono>倒角大全<Mono> - ...</Mono></span></Task>
        <Spacer />
        <Tray>
          <Icon name="network" />
          <Icon name="plus" />
          <Icon name="shield" />
          <time>8:35</time>
        </Tray>
      </TaskBar>

      <Watermark>
        <svg width="58" height="57" viewBox="0 0 58 57" aria-hidden="true">
          <g fill="none" strokeWidth="3" opacity=".6">
            <path d="M28 33C14 34 1 22 4 9C8-3 25 2 37 14" stroke="#8798aa" />
            <path d="M24 18C8 26 4 42 15 49C30 55 48 42 49 28" stroke="#6c78b5" />
            <path d="M38 14C54 22 60 36 50 46Q43 54 32 52" stroke="#c43f61" strokeWidth="4" />
          </g>
        </svg>
        <WatermarkText><strong>野火论坛</strong><span>www.proewildfire.cn</span></WatermarkText>
      </Watermark>
    </Page>
  );
}
